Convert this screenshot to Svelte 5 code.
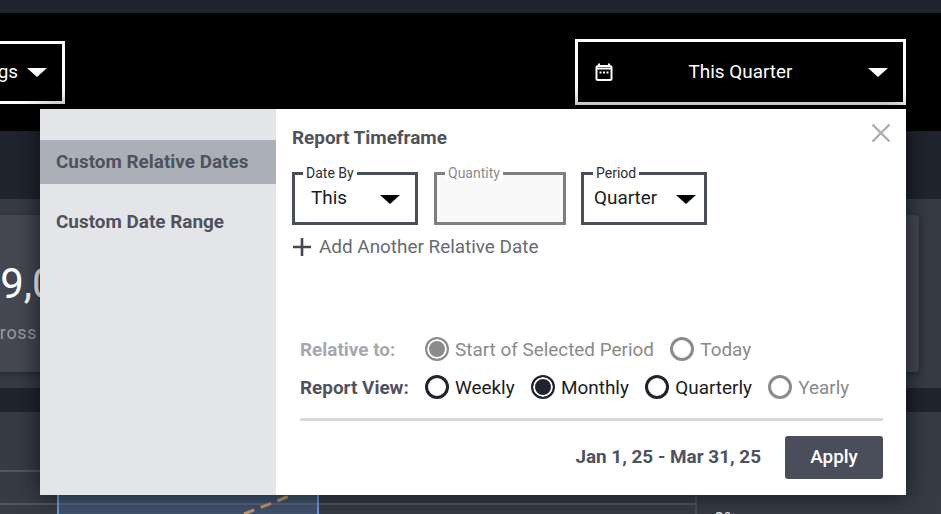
<script>
  const relativeTo = [
    { label: 'Start of Selected Period', checked: true },
    { label: 'Today', checked: false }
  ];
  const views = [
    { label: 'Weekly', checked: false, disabled: false },
    { label: 'Monthly', checked: true, disabled: false },
    { label: 'Quarterly', checked: false, disabled: false },
    { label: 'Yearly', checked: false, disabled: true }
  ];
</script>

<div class="page">
  <div class="topbar"></div>
  <header class="header">
    <button class="hbtn left"><span>Settings</span><i class="caret white"></i></button>
    <button class="hbtn right">
      <svg width="18" height="18" viewBox="0 0 18 18" fill="none">
        <path d="M4 0.5V4M14 0.5V4" stroke="#fff" stroke-width="2"/>
        <rect x="1.5" y="3" width="15" height="14" rx="1.5" stroke="#fff" stroke-width="2"/>
        <path d="M2 5.5H16" stroke="#fff" stroke-width="2"/>
        <path d="M4.5 9.5H6.5M8 9.5H10M11.5 9.5H13.5" stroke="#fff" stroke-width="2"/>
      </svg>
      <span>This Quarter</span>
      <i class="caret white"></i>
    </button>
  </header>
  <div class="band"></div>
  <section class="summary">
    <div class="card">
      <div class="value">$19,042</div>
      <div class="sub">Gross Revenue</div>
    </div>
  </section>
  <div class="strip"></div>
  <section class="chart">
    <div class="plot">
      <div class="highlight">
        <svg class="trend" width="262" height="30" viewBox="0 0 262 30" fill="none">
          <path d="M187 19L235 0" stroke="#c69a6f" stroke-width="3" stroke-dasharray="11 7"/>
        </svg>
      </div>
    </div>
    <div class="axis">0%</div>
  </section>

  <div class="popup">
    <aside class="side">
      <div class="opt active">Custom Relative Dates</div>
      <div class="opt">Custom Date Range</div>
    </aside>
    <div class="main">
      <button class="close" aria-label="Close">
        <svg width="20" height="20" viewBox="0 0 20 20" fill="none">
          <path d="M1.5 1.5L18.5 18.5M18.5 1.5L1.5 18.5" stroke="#a9adb4" stroke-width="2.4"/>
        </svg>
      </button>
      <h2 class="title">Report Timeframe</h2>
      <div class="fields">
        <fieldset class="field date">
          <legend>Date By</legend>
          <span class="val">This</span><i class="caret dark"></i>
        </fieldset>
        <fieldset class="field qty">
          <legend>Quantity</legend>
        </fieldset>
        <fieldset class="field period">
          <legend>Period</legend>
          <span class="val">Quarter</span><i class="caret dark"></i>
        </fieldset>
      </div>
      <div class="add">
        <svg width="20" height="20" viewBox="0 0 20 20" fill="none">
          <path d="M10 1V19M1 10H19" stroke="#444853" stroke-width="2.6"/>
        </svg>
        <span>Add Another Relative Date</span>
      </div>
      <div class="lower">
        <div class="row muted">
          <span class="rlabel">Relative to:</span>
          {#each relativeTo as r}
            <span class="radio dis" class:on={r.checked}><i></i>{r.label}</span>
          {/each}
        </div>
        <div class="row">
          <span class="rlabel">Report View:</span>
          {#each views as v}
            <span class="radio" class:on={v.checked} class:dis={v.disabled}><i></i>{v.label}</span>
          {/each}
        </div>
        <div class="foot">
          <span class="range">Jan 1, 25 - Mar 31, 25</span>
          <button class="apply">Apply</button>
        </div>
      </div>
    </div>
  </div>
</div>

<style>
  :global(html), :global(body) {
    margin: 0;
    overflow: hidden;
  }
  .page {
    position: relative;
    width: 941px;
    height: 514px;
    overflow: hidden;
    background: #363b46;
    font-family: Roboto, sans-serif;
  }
  .topbar {
    height: 13px;
    background: #20242f;
  }
  .header {
    height: 118px;
    background: #000;
    display: flex;
    justify-content: space-between;
    align-items: center;
    padding-right: 35px;
    box-sizing: border-box;
  }
  .hbtn {
    display: flex;
    align-items: center;
    box-sizing: border-box;
    background: #000;
    color: #fff;
    border: 3px solid #fff;
    font: 400 18.9px Roboto, sans-serif;
    padding: 0;
  }
  .hbtn span {
    margin-top: -2px;
  }
  .left {
    width: 125px;
    height: 63px;
    margin-left: -60px;
    margin-top: 1px;
    justify-content: flex-end;
    gap: 9px;
    padding-right: 15px;
  }
  .right {
    width: 331px;
    height: 66px;
    justify-content: space-between;
    padding: 0 15px 0 17px;
  }
  .caret {
    display: block;
    width: 0;
    height: 0;
    border-left: 10px solid transparent;
    border-right: 10px solid transparent;
    border-top: 9px solid #000;
  }
  .caret.white {
    border-top-color: #fff;
  }
  .band {
    height: 68px;
    background: #20242f;
  }
  .summary {
    height: 189px;
    box-sizing: border-box;
    padding: 16px 22px 16px 0;
  }
  .card {
    height: 157px;
    margin-left: -20px;
    background: #454853;
    border-radius: 4px;
    box-shadow: 0 2px 6px rgba(0, 0, 0, 0.35);
    padding: 44px 0 0 0;
    box-sizing: border-box;
    color: #fff;
  }
  .value {
    font-size: 42px;
    font-weight: 400;
    line-height: 50px;
    margin-left: -27px;
  }
  .sub {
    margin-top: 12px;
    font-size: 18px;
    line-height: 24px;
    letter-spacing: 0.6px;
    color: #9a9ca3;
    margin-left: 7px;
  }
  .strip {
    height: 24px;
    background: #20242f;
  }
  .chart {
    position: relative;
    display: flex;
    height: 102px;
  }
  .plot {
    position: relative;
    box-sizing: border-box;
    width: 697px;
    height: 102px;
    border-right: 2px solid #4b4f5a;
    background:
      linear-gradient(#55585f, #55585f) 0 58px / 100% 2px no-repeat,
      linear-gradient(#55585f, #55585f) 0 91px / 100% 2px no-repeat;
  }
  .highlight {
    position: absolute;
    left: 57px;
    top: 40px;
    width: 262px;
    height: 62px;
    box-sizing: border-box;
    border: 2px solid #6a9be0;
    border-width: 0 2px;
    background: rgba(96, 140, 205, 0.3);
  }
  .trend {
    position: absolute;
    left: -2px;
    top: 43px;
  }
  .axis {
    margin: 96px 0 0 17px;
    color: #eee;
    font-size: 18px;
    line-height: 22px;
  }

  .popup {
    position: absolute;
    left: 40px;
    top: 109px;
    width: 866px;
    height: 386px;
    display: flex;
    background: #fff;
    box-shadow: 0 0 24px rgba(0, 0, 0, 0.65);
  }
  .side {
    width: 236px;
    flex: none;
    background: #e4e5e9;
    padding-top: 31px;
    box-sizing: border-box;
  }
  .opt {
    height: 44px;
    line-height: 44px;
    padding-left: 16px;
    margin-bottom: 16px;
    font-size: 18.9px;
    font-weight: 700;
    color: #4f525d;
  }
  .opt.active {
    background: #abb0b8;
  }
  .main {
    position: relative;
    flex: 1;
    padding: 17px 23px 16px 16px;
    box-sizing: border-box;
    display: flex;
    flex-direction: column;
  }
  .close {
    position: absolute;
    right: 15px;
    top: 14px;
    background: none;
    border: 0;
    padding: 0;
    width: 20px;
    height: 20px;
  }
  .title {
    margin: 0;
    font-size: 18.9px;
    font-weight: 700;
    line-height: 24px;
    color: #4f525d;
  }
  .fields {
    display: flex;
    gap: 16px;
    margin-top: 15px;
  }
  .field {
    box-sizing: border-box;
    margin: 0;
    width: 126px;
    height: 60px;
    padding: 0 15px 0 16px;
    border: 3px solid #4a4e5a;
    display: flex;
    align-items: center;
    justify-content: space-between;
  }
  .field legend {
    font-size: 14px;
    line-height: 16px;
    padding: 0 3px;
    margin-left: -8px;
    color: #2a2d36;
    background: #fff;
  }
  .val {
    font-size: 18.9px;
    color: #1a1c22;
    margin-top: -8px;
  }
  .field .caret {
    margin-top: -4px;
  }
  .qty {
    width: 132px;
    border-color: #7f7f7f;
    background: #f9f9f9;
  }
  .qty legend {
    color: #8c8c8c;
  }
  .period {
    margin-left: -1px;
    padding: 0 8px 0 10px;
  }
  .period legend {
    margin-left: -1px;
  }
  .add {
    display: flex;
    align-items: center;
    gap: 7px;
    margin-top: 10px;
    font-size: 18.9px;
    line-height: 24px;
    color: #666a74;
  }
  .lower {
    margin-top: auto;
    margin-left: 8px;
    display: flex;
    flex-direction: column;
  }
  .row {
    display: flex;
    align-items: center;
    height: 38px;
    font-size: 18.9px;
    color: #1a1c22;
  }
  .rlabel {
    width: 125px;
    font-weight: 700;
    color: #4f525d;
  }
  .muted .rlabel {
    color: #a6a8ae;
  }
  .radio {
    display: flex;
    align-items: center;
    gap: 6px;
    margin-right: 16.4px;
  }
  .radio i {
    display: block;
    box-sizing: border-box;
    width: 24px;
    height: 24px;
    border-radius: 50%;
    border: 3px solid #20242f;
    background: #fff;
  }
  .radio.on i {
    background: #20242f;
    box-shadow: inset 0 0 0 2px #fff;
    border-width: 2px;
  }
  .radio.dis {
    color: #8a8a8a;
  }
  .radio.dis i {
    border-color: #8c8c8c;
  }
  .radio.dis.on i {
    background: #8c8c8c;
  }
  .foot {
    margin-top: 12px;
    border-top: 3px solid #d8d8dd;
    padding-top: 15px;
    display: flex;
    justify-content: flex-end;
    align-items: center;
    gap: 24px;
  }
  .range {
    font-size: 18.9px;
    font-weight: 700;
    color: #4f525d;
    margin-top: -2px;
  }
  .apply {
    width: 98px;
    height: 43px;
    border: 0;
    border-radius: 3px;
    padding: 0 0 2px;
    background: #4a4e5a;
    color: #fff;
    font: 500 18.9px Roboto, sans-serif;
  }
</style>
